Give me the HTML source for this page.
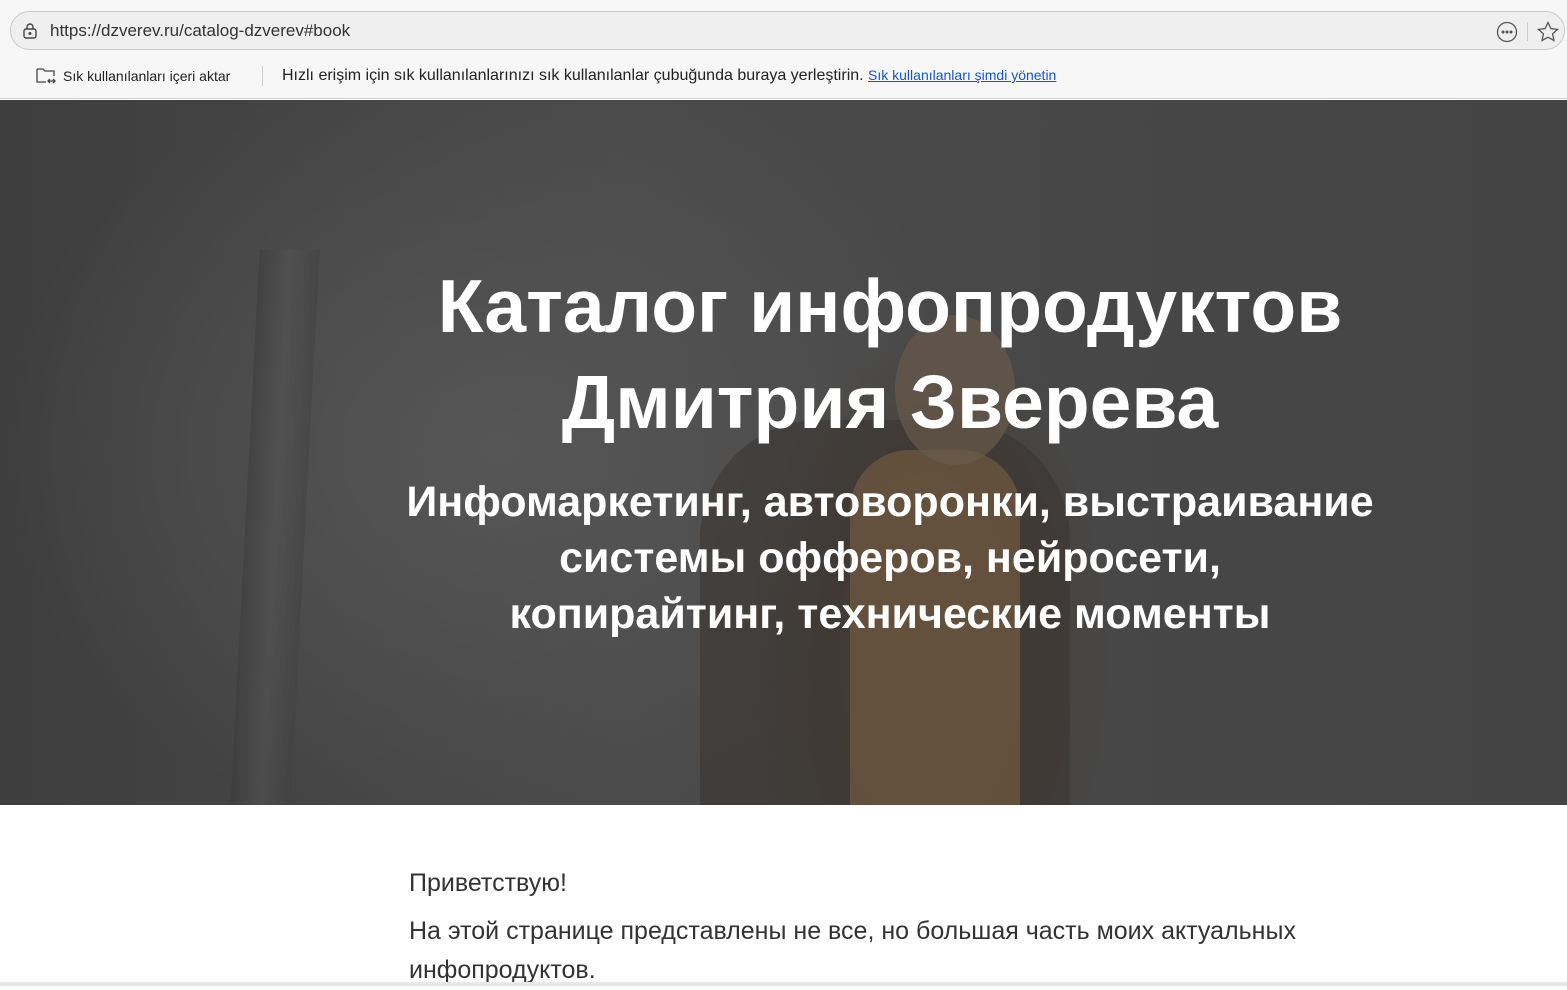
<!DOCTYPE html>
<html><head><meta charset="utf-8"><style>
*{margin:0;padding:0;box-sizing:border-box}
body{width:1567px;height:986px;overflow:hidden;background:#fff;font-family:"Liberation Sans","DejaVu Sans",sans-serif}
.top{height:99px;background:#f7f7f7;border-bottom:1px solid #d0d0d0;position:relative}
.url{position:absolute;left:10px;top:11px;width:1555px;height:39px;border:1px solid #c8c8c8;border-radius:20px;background:#efefef}
.url span{position:absolute;left:39px;top:9px;font-size:17px;color:#333}
.bm{position:absolute;top:66px;font-size:15px;color:#222}
.hero{position:absolute;top:100px;left:0;width:1567px;height:705px;background:
radial-gradient(ellipse 180px 330px at 930px 560px,#5a4a3a 0%,rgba(70,60,50,.6) 60%,transparent 100%),
radial-gradient(ellipse 500px 400px at 500px 350px,#565656 0%,transparent 100%),
linear-gradient(90deg,#3e3e3e 0%,#4a4a4a 40%,#474747 70%,#444 100%);overflow:hidden}
.pole{position:absolute;left:245px;top:150px;width:60px;height:560px;background:linear-gradient(90deg,#3a3a3a,#555,#404040);transform:skewX(-3deg);opacity:.5}
.shirt{position:absolute;left:850px;top:350px;width:170px;height:360px;background:#6b5640;border-radius:60px 60px 0 0;opacity:.8}
.jacket{position:absolute;left:700px;top:320px;width:370px;height:400px;background:#3a3632;border-radius:120px 120px 0 0;opacity:.6}
.head{position:absolute;left:895px;top:215px;width:120px;height:150px;background:#6a5a4c;border-radius:50%;opacity:.7}
h1{position:absolute;top:258px;left:0;width:1567px;padding-left:213px;text-align:center;color:#fff;font-size:75px;line-height:96px;font-weight:bold}
h2{position:absolute;top:474px;left:0;width:1567px;padding-left:213px;text-align:center;color:#fff;font-size:43px;line-height:56px;font-weight:bold}
.txt{position:absolute;left:409px;font-size:25px;color:#333;font-weight:300}
</style></head><body>
<div class="top">
<div class="url">
<svg style="position:absolute;left:11px;top:10px" width="16" height="18" viewBox="0 0 16 18" fill="none" stroke="#444" stroke-width="1.4"><rect x="2" y="7" width="12" height="9" rx="2"/><path d="M5 7V5a3 3 0 0 1 6 0v2"/><circle cx="8" cy="11.5" r=".8" fill="#444"/></svg>
<span>https://dzverev.ru/catalog-dzverev#book</span>
<svg style="position:absolute;left:1485px;top:9px" width="22" height="22" viewBox="0 0 22 22" fill="none" stroke="#555" stroke-width="1.3"><circle cx="11" cy="11" r="9.5"/><circle cx="7" cy="11" r=".9" fill="#555"/><circle cx="11" cy="11" r=".9" fill="#555"/><circle cx="15" cy="11" r=".9" fill="#555"/></svg>
<div style="position:absolute;left:1516px;top:10px;width:1px;height:19px;background:#ccc"></div>
<svg style="position:absolute;left:1525px;top:8px" width="24" height="24" viewBox="0 0 24 24" fill="none" stroke="#555" stroke-width="1.3"><path d="M12 2.5l2.9 6.1 6.6.8-4.9 4.5 1.3 6.6L12 17.2l-5.9 3.3 1.3-6.6-4.9-4.5 6.6-.8z"/></svg>
</div>
<svg style="position:absolute;left:35px;top:66px" width="22" height="19" viewBox="0 0 22 19" fill="none" stroke="#444" stroke-width="1.3"><path d="M2 3h6l2 2h9v5M2 3v13h9"/><path d="M13 15h7M15 13l-2 2 2 2M18 13l2 2-2 2"/></svg>
<div class="bm" style="left:63px;top:68px;font-size:14px">Sık kullanılanları içeri aktar</div>
<div style="position:absolute;left:262px;top:66px;width:1px;height:20px;background:#ccc"></div>
<div class="bm" style="left:282px;top:67px;font-size:16px">Hızlı erişim için sık kullanılanlarınızı sık kullanılanlar çubuğunda buraya yerleştirin. <a style="color:#1a55c8;font-size:14px;text-decoration:underline">Sık kullanılanları şimdi yönetin</a></div>
</div>
<div class="hero">
<div class="pole"></div><div class="jacket"></div><div class="shirt"></div><div class="head"></div>
</div>
<h1>Каталог инфопродуктов<br>Дмитрия Зверева</h1>
<h2>Инфомаркетинг, автоворонки, выстраивание<br>системы офферов, нейросети,<br>копирайтинг, технические моменты</h2>
<div class="txt" style="top:869px">Приветствую!</div>
<div class="txt" style="top:912px;line-height:39px">На этой странице представлены не все, но большая часть моих актуальных<br>инфопродуктов.</div>
<div style="position:absolute;left:0;top:982px;width:1567px;height:4px;background:#e8e8e8"></div>
</body></html>
